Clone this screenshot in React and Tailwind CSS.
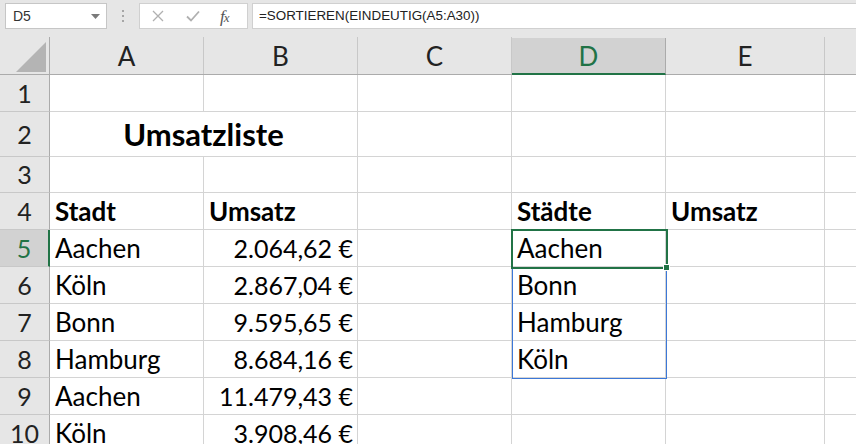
import React from "react";

const FONT = "font-['Lato','Noto_Sans',sans-serif]";

const colW = ["w-[154px]", "w-[154px]", "w-[154px]", "w-[154px]", "w-[159px]"];
const letters = ["A", "B", "C", "D", "E"];

const rows = [
  { n: 1, h: "h-[37px]", cells: {} },
  { n: 2, h: "h-[45px]", merged: "Umsatzliste", cells: {} },
  { n: 3, h: "h-[36px]", cells: {} },
  { n: 4, h: "h-[37px]", cells: { A: ["Stadt", "b"], B: ["Umsatz", "b"], D: ["Städte", "b"], E: ["Umsatz", "b"] } },
  { n: 5, h: "h-[37px]", cells: { A: ["Aachen"], B: ["2.064,62 €", "r"], D: ["Aachen"] } },
  { n: 6, h: "h-[37px]", cells: { A: ["Köln"], B: ["2.867,04 €", "r"], D: ["Bonn"] } },
  { n: 7, h: "h-[37px]", cells: { A: ["Bonn"], B: ["9.595,65 €", "r"], D: ["Hamburg"] } },
  { n: 8, h: "h-[37px]", cells: { A: ["Hamburg"], B: ["8.684,16 €", "r"], D: ["Köln"] } },
  { n: 9, h: "h-[37px]", cells: { A: ["Aachen"], B: ["11.479,43 €", "r"] } },
  { n: 10, h: "h-[37px]", cells: { A: ["Köln"], B: ["3.908,46 €", "r"] } },
];

function Cell({ w, content }) {
  const [text, mode] = content || [];
  return (
    <div
      className={`${w} shrink-0 h-full border-r border-b border-[#d4d4d4] flex items-end pb-[5px] ${
        mode === "r" ? "justify-end pr-[4px] text-[25px]" : "pl-[5px] text-[26px]"
      } leading-none text-black ${mode === "b" ? "font-bold" : ""} whitespace-nowrap overflow-visible`}
    >
      {text}
    </div>
  );
}

function Toolbar() {
  return (
    <div className="h-[37px] bg-[#e6e6e6] flex items-start pt-[3px] font-['Liberation_Sans',sans-serif]">
      <div className="ml-[5px] w-[102px] h-[26px] bg-white border border-[#c6c6c6] flex items-center justify-between pl-[7px] pr-[6px]">
        <span className="text-[14px] text-[#333]">D5</span>
        <svg width="9" height="5" viewBox="0 0 9 5"><path d="M0 0h9L4.5 5z" fill="#7a7a7a" /></svg>
      </div>
      <div className="w-[32px] h-[26px] flex flex-col items-center justify-center gap-[3px]">
        <div className="w-[2px] h-[2px] bg-[#a6a6a6]" />
        <div className="w-[2px] h-[2px] bg-[#a6a6a6]" />
        <div className="w-[2px] h-[2px] bg-[#a6a6a6]" />
      </div>
      <div className="w-[109px] h-[26px] bg-white border border-[#d0d0d0] flex items-center">
        <svg className="ml-[12px]" width="12" height="12" viewBox="0 0 12 12">
          <path d="M1 1L11 11M11 1L1 11" stroke="#b0b0b0" strokeWidth="1.3" />
        </svg>
        <svg className="ml-[22px]" width="14" height="12" viewBox="0 0 14 12">
          <path d="M1 6.5L5 10.5L13 1.5" stroke="#b0b0b0" strokeWidth="1.8" fill="none" />
        </svg>
        <span className="ml-[20px] text-[17px] leading-none italic text-[#555] font-['Liberation_Serif',serif] tracking-[-1px]">
          f<span className="text-[13px]">x</span>
        </span>
      </div>
      <div className="ml-[4px] flex-1 h-[26px] bg-white border-y border-l border-[#d0d0d0] flex items-center pl-[6px]">
        <span className="text-[13.4px] text-[#222]">=SORTIEREN(EINDEUTIG(A5:A30))</span>
      </div>
    </div>
  );
}

export default function App() {
  return (
    <div className={`w-[856px] h-[444px] overflow-hidden bg-white relative ${FONT}`}>
      <Toolbar />
      {/* column headers */}
      <div className="h-[38px] flex bg-[#e6e6e6] border-b border-[#ababab]">
        <div className="w-[50px] shrink-0 h-full border-r border-[#ababab] relative">
          <svg className="absolute right-[3px] bottom-[2px]" width="30" height="30" viewBox="0 0 30 30">
            <path d="M30 0V30H0z" fill="#b4b4b4" />
          </svg>
        </div>
        {letters.map((l, i) => (
          <div
            key={l}
            className={`${colW[i]} shrink-0 h-full border-r flex items-center justify-center text-[26px] leading-none ${
              l === "D"
                ? "bg-[#d2d2d2] text-[#217346] border-[#ababab] mt-[1px] border-b-[2px] border-b-[#217346] -mb-[1px]"
                : "text-[#222] border-[#c8c8c8]"
            }`}
          >
            {l}
          </div>
        ))}
        <div className="flex-1 h-full" />
      </div>
      {/* rows */}
      {rows.map((r) => (
        <div key={r.n} className={`${r.h} flex`}>
          <div
            className={`w-[50px] shrink-0 h-full border-b flex items-center justify-center text-[25px] leading-none ${
              r.n === 5
                ? "bg-[#d2d2d2] text-[#217346] border-r-[2px] border-r-[#217346] border-b-[#c8c8c8]"
                : "bg-[#e6e6e6] text-[#222] border-r border-r-[#ababab] border-b-[#c8c8c8]"
            }`}
          >
            {r.n}
          </div>
          {r.merged ? (
            <>
              <div className="w-[308px] shrink-0 h-full border-r border-b border-[#d4d4d4] flex items-end justify-center pb-[6px] text-[31px] leading-none font-bold text-black">
                {r.merged}
              </div>
              {letters.slice(2).map((l, i) => (
                <Cell key={l} w={colW[i + 2]} />
              ))}
            </>
          ) : (
            letters.map((l, i) => <Cell key={l} w={colW[i]} content={r.cells[l]} />)
          )}
          <div className="flex-1 h-full border-b border-[#d4d4d4]" />
        </div>
      ))}
      {/* spill range border */}
      <div className="absolute left-[512px] top-[230px] w-[155px] h-[149px] border border-[#3c78d8] pointer-events-none" />
      {/* active cell */}
      <div className="absolute left-[511px] top-[229px] w-[157px] h-[40px] border-2 border-[#217346] pointer-events-none" />
      <div className="absolute left-[663px] top-[264px] w-[7px] h-[7px] bg-[#217346] border border-white pointer-events-none" />
    </div>
  );
}
